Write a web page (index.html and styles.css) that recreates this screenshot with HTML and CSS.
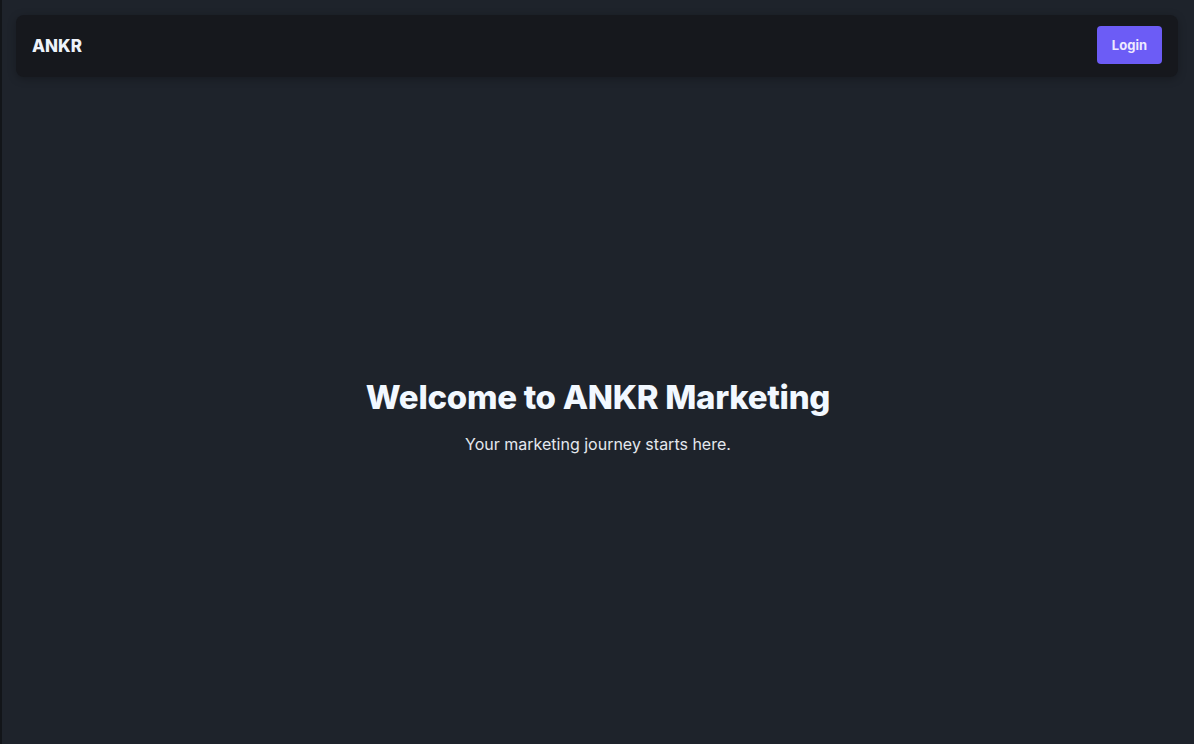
FILE: index.html
```html
<!DOCTYPE html>
<html>
  <head>
    <title>ANKR Marketing</title>
    <link rel="stylesheet" href="styles.css">
  </head>
  <body>
    <nav class="navbar">
      <div class="brand">ANKR</div>
      <button class="login-btn">Login</button>
    </nav>
    <main class="hero">
      <h1 class="hero-title">Welcome to ANKR Marketing</h1>
      <p class="hero-text">Your marketing journey starts here.</p>
    </main>
  </body>
</html>
```

FILE: styles.css
```css
html,
body {
  height: 100%;
}

body {
  display: flex;
  flex-direction: column;
  box-sizing: border-box;
  margin: 0;
  padding: 15px 16px 0 16px;
  border-left: 2px solid #121519;
  background-color: #1e232b;
  color: #f5f7fa;
  font-family: Inter, "Noto Sans", sans-serif;
}

.navbar {
  display: flex;
  justify-content: space-between;
  align-items: center;
  height: 62px;
  box-sizing: border-box;
  padding: 0 16px;
  margin-left: -2px;
  border-radius: 8px;
  background-color: #16181d;
  box-shadow: 0 2px 8px rgba(0, 0, 0, 0.25);
}

.brand {
  font-size: 17px;
  font-weight: 800;
  color: #eef3fa;
}

.login-btn {
  height: 38px;
  margin-top: -2px;
  padding: 0 15px;
  border: none;
  border-radius: 4px;
  background-color: #6c5cf6;
  color: #eeeaff;
  font-family: inherit;
  font-size: 13px;
  font-weight: 700;
  cursor: pointer;
}

.hero {
  flex: 1;
  display: flex;
  flex-direction: column;
  justify-content: center;
  align-items: center;
  padding-top: 10px;
}

.hero-title {
  margin: 0 0 17px 0;
  font-size: 33px;
  font-weight: 800;
  letter-spacing: -0.3px;
  color: #f2f8ff;
}

.hero-text {
  margin: 0;
  font-size: 16px;
  color: #e4e8ee;
}
```
